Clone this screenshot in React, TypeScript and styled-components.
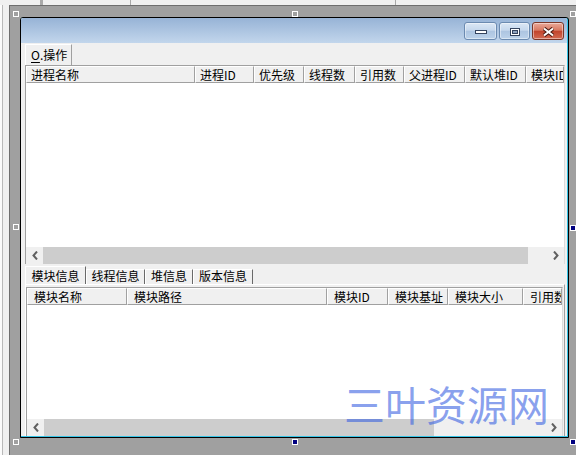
import styled, { createGlobalStyle } from "styled-components";

const GlobalStyle = createGlobalStyle`
  html, body {
    margin: 0;
    padding: 0;
    background: #f0f0f0;
  }
  body {
    font-family: "Noto Sans CJK SC", "Liberation Sans", sans-serif;
  }
`;

const Screen = styled.div`
  position: relative;
  width: 576px;
  height: 455px;
  overflow: hidden;
  background: #f0f0f0;
  display: flex;
  flex-direction: column;
`;

const TopStrip = styled.div`
  height: 5px;
  flex: none;
  display: flex;
  background: #f0f0f0;
`;

const TopSep = styled.div<{ $gap: number; $w: number }>`
  margin-left: ${(p) => p.$gap}px;
  width: ${(p) => p.$w}px;
  background: #a9a9a9;
`;

const Body = styled.div`
  flex: 1;
  display: flex;
  min-height: 0;
`;

const LeftStrip = styled.div`
  width: 9px;
  flex: none;
  background: linear-gradient(
    to right,
    #fbfbfb 0 2px,
    #b9b9b9 2px 3px,
    #f0f0f0 3px
  );
`;

const Surface = styled.div`
  flex: 1;
  background: #a0a0a0;
  border-top: 1px solid #6e6e6e;
  border-left: 1px solid #6e6e6e;
  padding: 11px 0 0 10px;
`;

const Window = styled.div`
  box-sizing: border-box;
  width: 549px;
  height: 421px;
  border: 1px solid #000;
  border-radius: 3px 3px 0 0;
  background: #35c4e6;
  padding: 0 1px 1px 0;
`;

const Frame = styled.div`
  height: 100%;
  display: flex;
  flex-direction: column;
  background: #f0f0f0;
  overflow: hidden;
  border-radius: 2px 2px 0 0;
`;

const TitleBar = styled.div`
  box-sizing: border-box;
  height: 25px;
  flex: none;
  display: flex;
  justify-content: flex-end;
  align-items: flex-start;
  gap: 2px;
  padding: 4px 3px 0 0;
  background: linear-gradient(#97b3d6, #c2d6ec);
`;

const CaptionButton = styled.div<{ $w: number; $close?: boolean }>`
  box-sizing: border-box;
  width: ${(p) => p.$w}px;
  height: 18px;
  display: flex;
  align-items: center;
  justify-content: center;
  padding-top: 1px;
  border-radius: 3px;
  border: 1px solid ${(p) => (p.$close ? "#7b3627" : "#6b8ab0")};
  box-shadow: inset 0 0 0 1px rgba(255, 255, 255, 0.45);
  background: ${(p) =>
    p.$close
      ? "linear-gradient(#eaa898 0%, #d87a63 45%, #c2452d 52%, #d36a52 100%)"
      : "linear-gradient(#dbe7f5 0%, #c6d8ed 45%, #adc5e1 52%, #bcd2ea 100%)"};
`;

const Client = styled.div`
  flex: 1;
  min-height: 0;
  display: flex;
  flex-direction: column;
  padding: 1px 2px 0 4px;
`;

const OpTab = styled.div`
  box-sizing: border-box;
  align-self: flex-start;
  width: 47px;
  height: 21px;
  flex: none;
  padding: 2px 0 0 5px;
  font-size: 12px;
  line-height: 16px;
  color: #000;
  background: #f0f0f0;
  border-top: 1px solid #fff;
  border-left: 1px solid #fff;
  border-right: 1px solid #a0a0a0;
  u {
    text-decoration-thickness: 1px;
    text-underline-offset: 2px;
  }
`;

const ListView = styled.div<{ $h?: number }>`
  box-sizing: border-box;
  ${(p) => (p.$h ? `height: ${p.$h}px; flex: none;` : "flex: 1; min-height: 0;")}
  display: flex;
  flex-direction: column;
  background: #fff;
  border-top: 1px solid #a0a0a0;
  border-left: 1px solid #a0a0a0;
  border-right: 1px solid #dcdcdc;
  overflow: hidden;
`;

const Header = styled.div`
  height: 17px;
  flex: none;
  display: flex;
`;

const HeaderCell = styled.div<{ $w?: number; $pad: number }>`
  box-sizing: border-box;
  ${(p) => (p.$w ? `width: ${p.$w}px; flex: none;` : "flex: 1; min-width: 0;")}
  height: 17px;
  padding-left: ${(p) => p.$pad}px;
  font-size: 12px;
  line-height: 15px;
  color: #000;
  white-space: nowrap;
  overflow: hidden;
  background: #f0f0f0;
  border-top: 1px solid #fff;
  border-left: 1px solid #fff;
  border-right: 1px solid #a0a0a0;
  border-bottom: 1px solid #a0a0a0;
`;

const ListBody = styled.div`
  flex: 1;
  background: #fff;
`;

const HScroll = styled.div`
  height: 17px;
  flex: none;
  display: flex;
  background: #f0f0f0;
`;

const ScrollButton = styled.div`
  width: 17px;
  flex: none;
  display: flex;
  align-items: center;
  justify-content: center;
`;

const Thumb = styled.div<{ $w: number }>`
  width: ${(p) => p.$w}px;
  flex: none;
  background: #cdcdcd;
`;

const Track = styled.div`
  flex: 1;
`;

const TabRow = styled.div`
  height: 18px;
  flex: none;
  display: flex;
  align-items: flex-end;
  margin-top: 2px;
`;

const Tab = styled.div<{ $w: number; $active?: boolean }>`
  box-sizing: border-box;
  width: ${(p) => p.$w}px;
  height: ${(p) => (p.$active ? 18 : 15)}px;
  flex: none;
  display: flex;
  align-items: flex-end;
  justify-content: center;
  padding-bottom: 1px;
  font-size: 12px;
  line-height: 14px;
  color: #000;
  white-space: nowrap;
  background: #f0f0f0;
  border-top: 1px solid #fff;
  border-left: 1px solid #fff;
  border-right: 1px solid #696969;
`;

const TabPanel = styled.div`
  flex: 1;
  min-height: 0;
  display: flex;
  flex-direction: column;
  padding: 2px 1px 0 0;
  border-top: 1px solid #fff;
  border-left: 1px solid #fff;
  border-right: 1px solid #a0a0a0;
`;

const Handle = styled.div<{ $x: number; $y: number; $filled?: boolean }>`
  position: absolute;
  left: ${(p) => p.$x}px;
  top: ${(p) => p.$y}px;
  box-sizing: border-box;
  width: 6px;
  height: 6px;
  border: 1px solid #fff;
  background: ${(p) => (p.$filled ? "#000080" : "transparent")};
`;

const Watermark = styled.div`
  position: absolute;
  left: 344px;
  top: 383px;
  font-family: "Noto Sans CJK SC", sans-serif;
  font-size: 41px;
  line-height: 41px;
  white-space: nowrap;
  color: rgba(58, 98, 225, 0.6);
  pointer-events: none;
`;

const Chevron = ({ dir }: { dir: "left" | "right" }) => (
  <svg width="6" height="9" viewBox="0 0 6 9">
    <polyline
      points={dir === "left" ? "5,0.5 1.5,4.5 5,8.5" : "1,0.5 4.5,4.5 1,8.5"}
      fill="none"
      stroke="#606060"
      strokeWidth="2"
    />
  </svg>
);

const Scrollbar = ({ thumb }: { thumb: number }) => (
  <HScroll>
    <ScrollButton>
      <Chevron dir="left" />
    </ScrollButton>
    <Thumb $w={thumb} />
    <Track />
    <ScrollButton>
      <Chevron dir="right" />
    </ScrollButton>
  </HScroll>
);

type Column = { name: string; w?: number };

const processColumns: Column[] = [
  { name: "进程名称", w: 169 },
  { name: "进程ID", w: 59 },
  { name: "优先级", w: 50 },
  { name: "线程数", w: 51 },
  { name: "引用数", w: 49 },
  { name: "父进程ID", w: 61 },
  { name: "默认堆ID", w: 61 },
  { name: "模块ID" },
];

const moduleColumns: Column[] = [
  { name: "模块名称", w: 100 },
  { name: "模块路径", w: 200 },
  { name: "模块ID", w: 61 },
  { name: "模块基址", w: 60 },
  { name: "模块大小", w: 75 },
  { name: "引用数" },
];

const tabs = [
  { name: "模块信息", w: 61 },
  { name: "线程信息", w: 59 },
  { name: "堆信息", w: 48 },
  { name: "版本信息", w: 60 },
];

const handles = [
  { x: 13, y: 11 },
  { x: 292, y: 11 },
  { x: 570, y: 11 },
  { x: 13, y: 224 },
  { x: 570, y: 225, filled: true },
  { x: 13, y: 439 },
  { x: 292, y: 439, filled: true },
  { x: 570, y: 439, filled: true },
];

const ListHeader = ({ columns, pad }: { columns: Column[]; pad: number }) => (
  <Header>
    {columns.map((c) => (
      <HeaderCell key={c.name} $w={c.w} $pad={pad}>
        {c.name}
      </HeaderCell>
    ))}
  </Header>
);

export default function App() {
  return (
    <>
      <GlobalStyle />
      <Screen>
        <TopStrip>
          <TopSep $gap={40} $w={3} />
          <TopSep $gap={87} $w={1} />
          <TopSep $gap={264} $w={1} />
        </TopStrip>
        <Body>
          <LeftStrip />
          <Surface>
            <Window>
              <Frame>
                <TitleBar>
                  <CaptionButton $w={33}>
                    <svg width="12" height="4" viewBox="0 0 12 4">
                      <rect x="0.5" y="0.5" width="11" height="3" fill="#fff" stroke="#34435e" />
                    </svg>
                  </CaptionButton>
                  <CaptionButton $w={31}>
                    <svg width="10" height="8" viewBox="0 0 10 8">
                      <rect x="0.5" y="0.5" width="9" height="7" fill="#fff" stroke="#34435e" />
                      <rect x="2.5" y="2.5" width="5" height="3" fill="#8ea3c0" stroke="#34435e" />
                    </svg>
                  </CaptionButton>
                  <CaptionButton $w={32} $close>
                    <svg width="13" height="10" viewBox="0 0 13 10">
                      <path d="M2 1.5 L11 8.5 M11 1.5 L2 8.5" stroke="#4a1a12" strokeWidth="4" />
                      <path d="M2 1.5 L11 8.5 M11 1.5 L2 8.5" stroke="#fff" strokeWidth="2" />
                    </svg>
                  </CaptionButton>
                </TitleBar>
                <Client>
                  <OpTab>
                    <u>O</u>.操作
                  </OpTab>
                  <ListView $h={199}>
                    <ListHeader columns={processColumns} pad={4} />
                    <ListBody />
                    <Scrollbar thumb={485} />
                  </ListView>
                  <TabRow>
                    {tabs.map((t, i) => (
                      <Tab key={t.name} $w={t.w} $active={i === 0}>
                        {t.name}
                      </Tab>
                    ))}
                  </TabRow>
                  <TabPanel>
                    <ListView>
                      <ListHeader columns={moduleColumns} pad={6} />
                      <ListBody />
                      <Scrollbar thumb={390} />
                    </ListView>
                  </TabPanel>
                </Client>
              </Frame>
            </Window>
          </Surface>
        </Body>
        {handles.map((h) => (
          <Handle key={`${h.x}-${h.y}`} $x={h.x} $y={h.y} $filled={h.filled} />
        ))}
        <Watermark>三叶资源网</Watermark>
      </Screen>
    </>
  );
}
